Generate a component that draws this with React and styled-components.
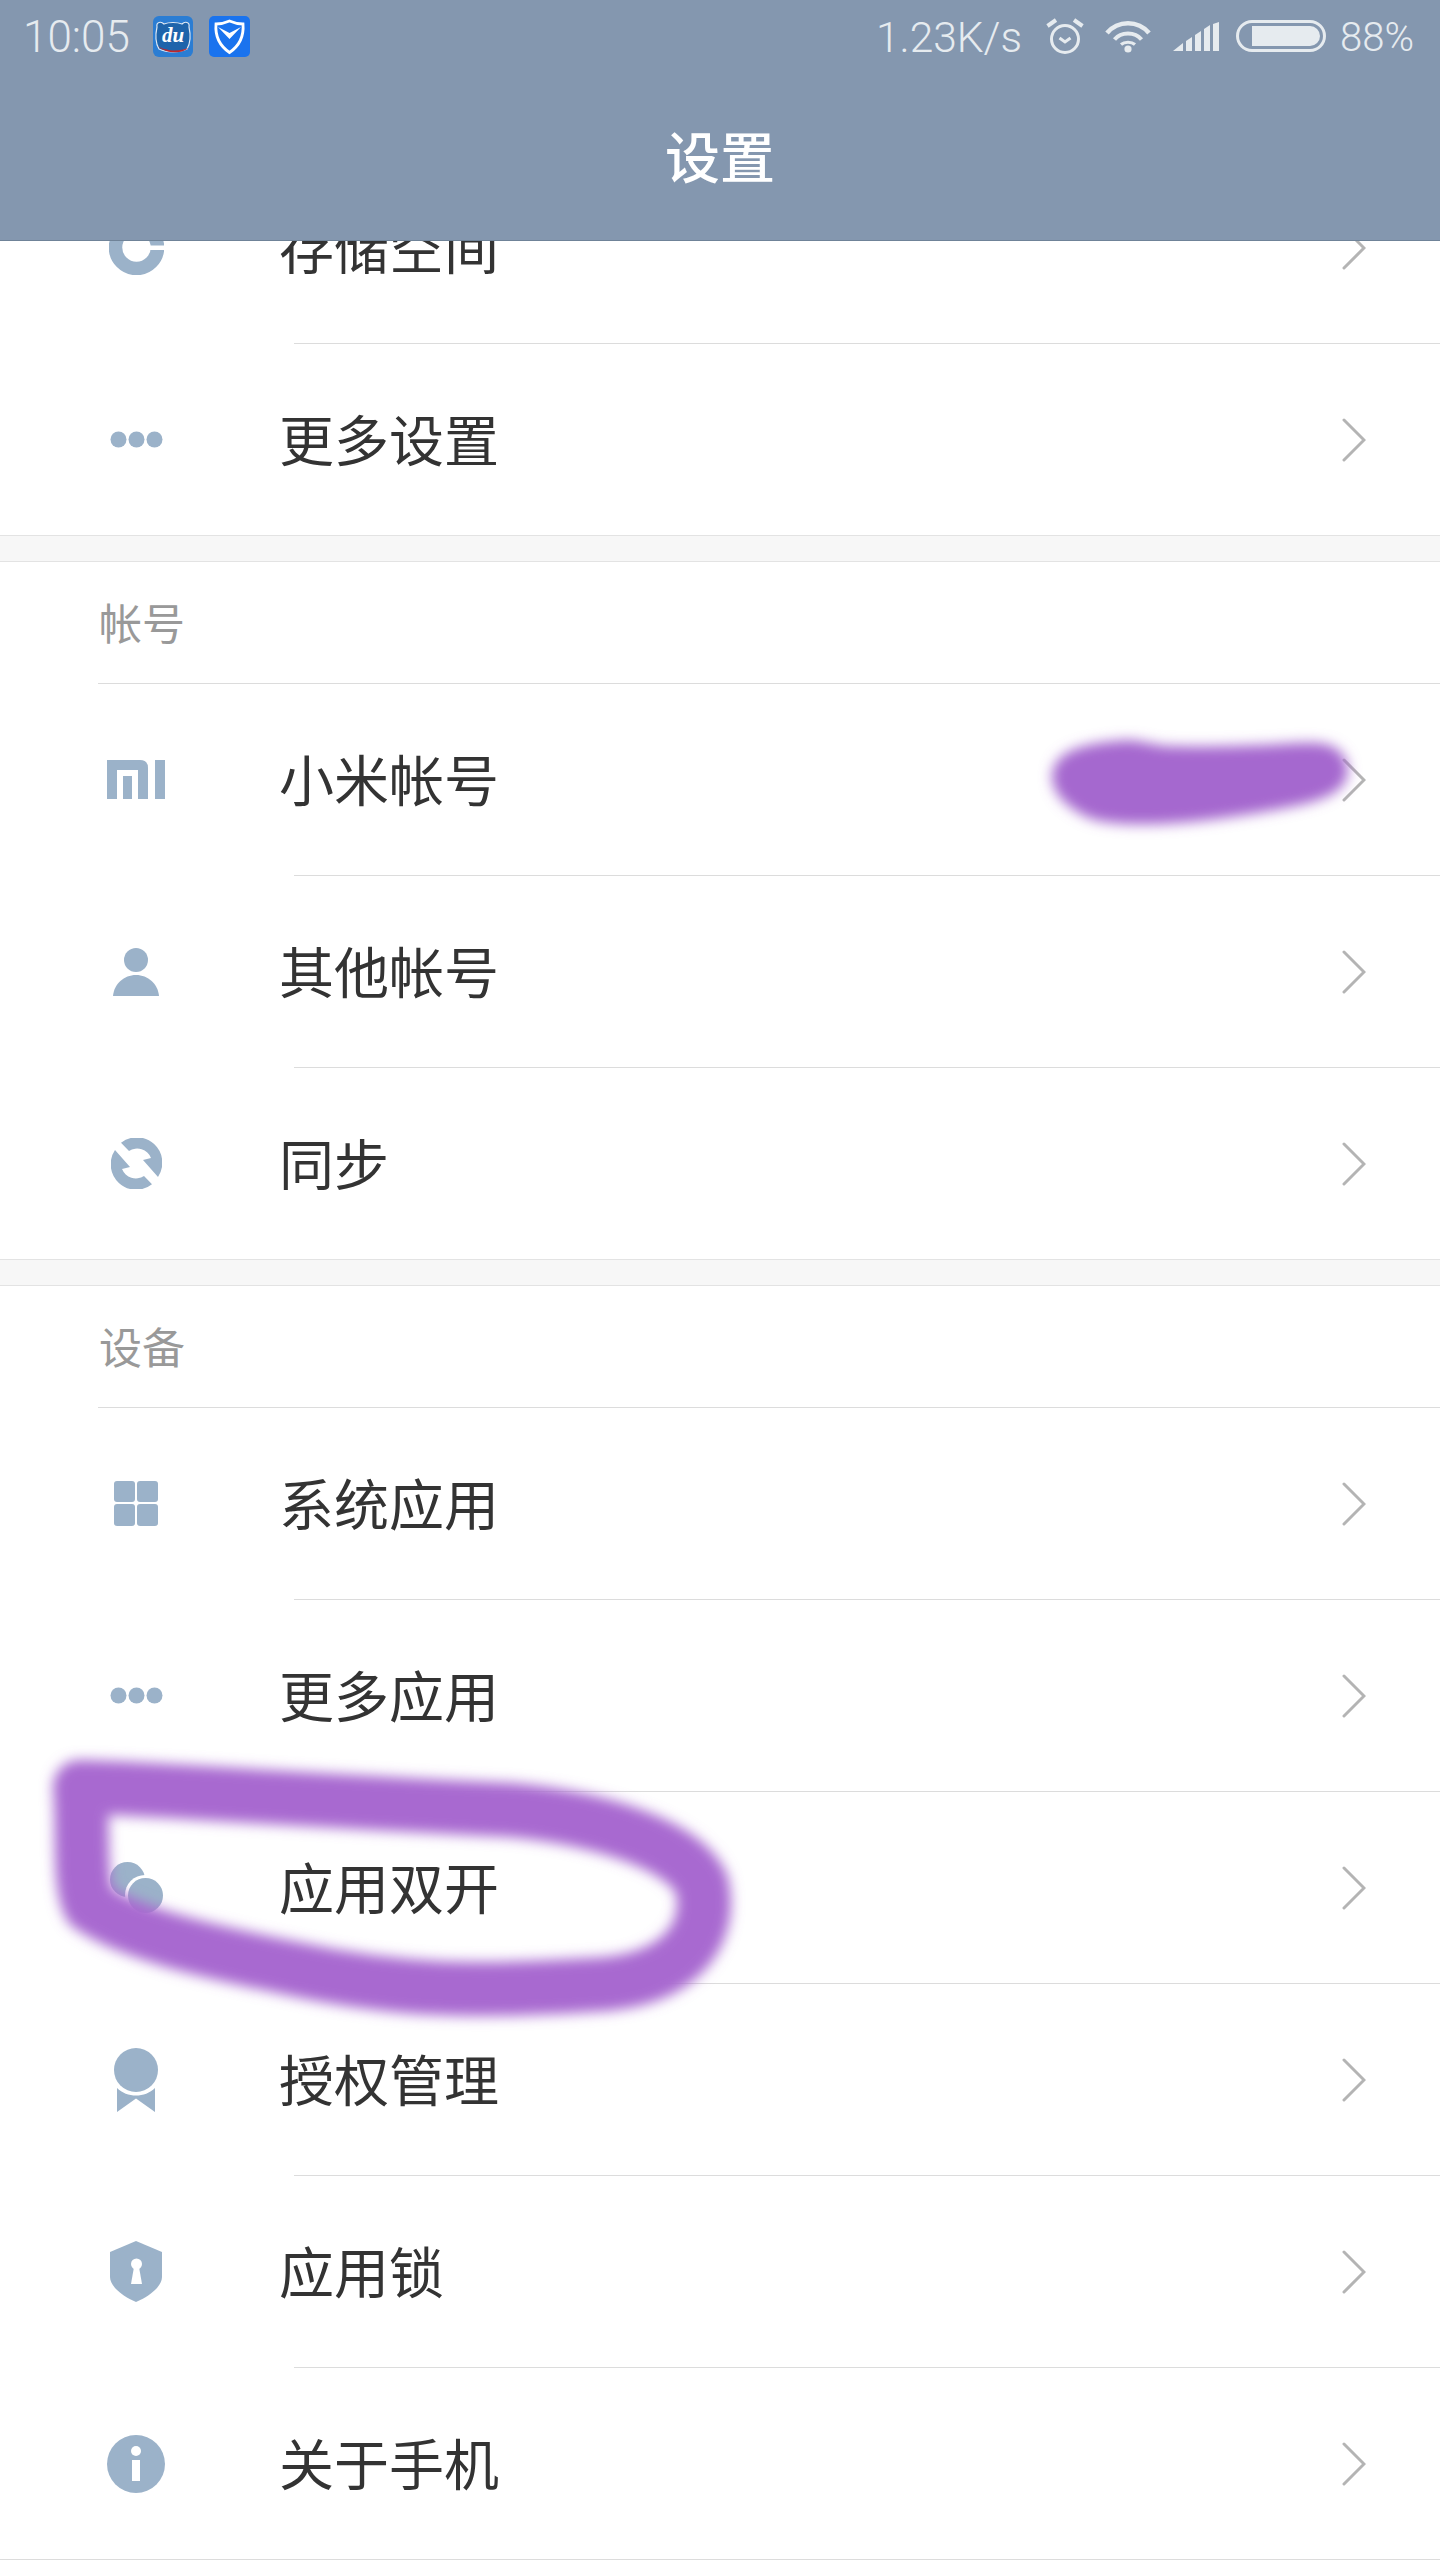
import React from 'react';
import styled, { createGlobalStyle } from 'styled-components';

const GlobalStyle = createGlobalStyle`
	html, body {
		margin: 0;
		padding: 0;
		background: #fff;
	}
`;

const Page = styled.div`
	position: relative;
	width: 1440px;
	height: 2560px;
	padding-top: 152px;
	box-sizing: border-box;
	overflow: hidden;
	background: #fff;
	font-family: "Noto Sans CJK SC", "Noto Sans", sans-serif;
`;

const Header = styled.header`
	position: absolute;
	top: 0;
	left: 0;
	right: 0;
	z-index: 2;
	height: 241px;
	box-sizing: border-box;
	background: #8497af;
	border-bottom: 1px solid #6f8398;
`;

const StatusBar = styled.div`
	display: flex;
	align-items: center;
	justify-content: space-between;
	height: 72px;
	padding: 0 26px 0 23px;
	font-family: Roboto, "Liberation Sans", sans-serif;
	font-weight: 300;
	color: #e6ebef;
`;

const StatusGroup = styled.div`
	display: flex;
	align-items: center;
`;

const StatusText = styled.span`
	padding-top: 3px;
	line-height: 69px;
	font-size: ${p => p.$size}px;
	margin-left: ${p => p.$gap || 0}px;
`;

const TrayIcon = styled.svg`
	display: block;
	flex: none;
	margin-left: ${p => p.$gap || 0}px;
`;

const Title = styled.h1`
	margin: 0;
	height: 168px;
	display: flex;
	align-items: center;
	justify-content: center;
	padding-bottom: 4px;
	box-sizing: border-box;
	font-size: 55px;
	font-weight: 500;
	color: #fff;
`;

const Gap = styled.div`
	height: 27px;
	box-sizing: border-box;
	background: #f7f7f7;
	border-top: 1px solid #e3e3e3;
	border-bottom: 1px solid #e3e3e3;
`;

const SectionTitle = styled.div`
	height: 121px;
	padding-left: 99px;
	padding-bottom: 4px;
	box-sizing: border-box;
	display: flex;
	align-items: center;
	font-size: 43px;
	color: #999;
`;

const Divider = styled.div`
	height: 1px;
	margin-left: ${p => p.$inset}px;
	background: #dcdcdc;
`;

const Row = styled.div`
	display: flex;
	align-items: center;
	height: 191px;
	padding-right: 74px;
`;

const IconSlot = styled.div`
	flex: none;
	width: 272px;
	display: flex;
	justify-content: center;
`;

const Label = styled.div`
	flex: 1;
	margin-left: 7px;
	padding-bottom: 6px;
	font-size: 55px;
	color: #333;
`;

const Glyph = styled.svg`
	display: block;
	fill: #9bb2c9;
`;

const Scribble = styled.svg`
	position: absolute;
	top: 0;
	left: 0;
	z-index: 1;
	pointer-events: none;
`;

const Chevron = () => (
	<svg width="24" height="44" viewBox="0 0 24 44" fill="none" stroke="#b4b4b4" strokeWidth="3" strokeLinecap="round" strokeLinejoin="miter">
		<path d="M2 2 L22 22 L2 42" />
	</svg>
);

const StorageIcon = () => (
	<Glyph width="55" height="55" viewBox="0 0 55 55">
		<circle cx="27.5" cy="27.5" r="21" fill="none" stroke="#9bb2c9" strokeWidth="13.5" />
		<rect x="40" y="25.5" width="16" height="4.5" fill="#fff" />
	</Glyph>
);

const DotsIcon = () => (
	<Glyph width="53" height="17" viewBox="0 0 53 17">
		<circle cx="8.5" cy="8.5" r="8" />
		<circle cx="26.5" cy="8.5" r="8" />
		<circle cx="44.5" cy="8.5" r="8" />
	</Glyph>
);

const MiIcon = () => (
	<Glyph width="58" height="39" viewBox="0 0 58 39">
		<path fillRule="evenodd" d="M0 0 H33 Q41 0 41 8 V39 H31 V10 H10 V39 H0 Z M16 16 H25 V39 H16 Z" />
		<rect x="48" y="0" width="10" height="39" />
	</Glyph>
);

const PersonIcon = () => (
	<Glyph width="46" height="48" viewBox="0 0 46 48">
		<ellipse cx="23" cy="12" rx="12" ry="12" />
		<path d="M0 48 C1 36 11 27 23 27 C35 27 45 36 46 48 Z" />
	</Glyph>
);

const SyncIcon = () => (
	<Glyph width="51" height="51" viewBox="0 0 51 51">
		<path d="M10 4.8 A25.5 25.5 0 0 1 47 39 L32 22 L40 20 A15 15 0 0 0 18 13 Z" />
		<path d="M10 4.8 A25.5 25.5 0 0 1 47 39 L32 22 L40 20 A15 15 0 0 0 18 13 Z" transform="rotate(180 25.5 25.5)" />
	</Glyph>
);

const GridIcon = () => (
	<Glyph width="44" height="45" viewBox="0 0 44 45">
		<rect x="0" y="0" width="21" height="21" rx="3" />
		<rect x="23" y="0" width="21" height="21" rx="3" />
		<rect x="0" y="23" width="21" height="22" rx="3" />
		<rect x="23" y="23" width="21" height="22" rx="3" />
	</Glyph>
);

const TwinIcon = () => (
	<Glyph width="53" height="51" viewBox="0 0 53 51">
		<circle cx="17.5" cy="17.5" r="17.5" />
		<circle cx="35" cy="33" r="20" fill="#fff" />
		<circle cx="35.5" cy="33.5" r="17.5" />
	</Glyph>
);

const MedalIcon = () => (
	<Glyph width="44" height="64" viewBox="0 0 44 64">
		<ellipse cx="22" cy="22" rx="22" ry="22" />
		<path d="M3 40 C8 45 15 47.5 22 47.5 C29 47.5 36 45 41 40 V64 L22 50.5 L3 64 Z" />
	</Glyph>
);

const LockIcon = () => (
	<Glyph width="52" height="61" viewBox="0 0 52 61">
		<path d="M26 0 L52 11 V36 C52 46 38 56 26 61 C14 56 0 46 0 36 V11 Z" />
		<circle cx="26.5" cy="23" r="5.5" fill="#fff" />
		<path d="M24 26 H29 L32 43 H21 Z" fill="#fff" />
	</Glyph>
);

const InfoIcon = () => (
	<Glyph width="58" height="58" viewBox="0 0 58 58">
		<circle cx="29" cy="29" r="29" />
		<circle cx="29" cy="16" r="5" fill="#fff" />
		<rect x="25" y="25" width="8" height="21" fill="#fff" />
	</Glyph>
);

const DuBadge = () => (
	<TrayIcon $gap={23} width="40" height="41" viewBox="0 0 40 41">
		<rect width="40" height="41" rx="6" fill="#2b7dd3" />
		<path d="M4 11 C3 6 8 5 11 8 C16 6 24 6 29 8 C32 5 37 6 36 11 C38 20 37 28 34 33 C26 37 14 37 6 33 C3 28 2 20 4 11 Z" fill="#1e64ab" stroke="#dfe9f4" strokeWidth="1.2" />
		<path d="M5 30 C12 35 26 36 35 32 C30 38 12 38 5 30 Z" fill="#c0262a" />
		<text x="20" y="26" textAnchor="middle" fontFamily="'Liberation Serif', serif" fontStyle="italic" fontWeight="700" fontSize="21" fill="#fff">du</text>
	</TrayIcon>
);

const ShieldBadge = () => (
	<TrayIcon $gap={16} width="41" height="41" viewBox="0 0 41 41">
		<rect width="41" height="41" rx="5" fill="#1a73ee" />
		<path d="M20.5 5 C25 7 30 8 34 8 C35 20 30 30 20.5 36.5 C11 30 6 20 7 8 C11 8 16 7 20.5 5 Z" fill="none" stroke="#fff" strokeWidth="2.8" />
		<path d="M9 11 L20.5 23 L32 11 L20.5 17 Z" fill="#fff" />
	</TrayIcon>
);

const AlarmIcon = () => (
	<TrayIcon $gap={24} width="38" height="36" viewBox="0 0 38 36" fill="none" stroke="#e6ebef">
		<circle cx="19" cy="21" r="13.5" strokeWidth="3" />
		<path d="M13.5 20 L19 24 L24.5 20" strokeWidth="3" />
		<path d="M1.5 8 L10 2" strokeWidth="4" />
		<path d="M36.5 8 L28 2" strokeWidth="4" />
	</TrayIcon>
);

const WifiIcon = () => (
	<TrayIcon $gap={21} width="46" height="33" viewBox="0 0 46 33" fill="none" stroke="#e6ebef">
		<path d="M2 13 C13 0 33 0 44 13" strokeWidth="4.6" />
		<path d="M9.5 19.5 C16 11.5 30 11.5 36.5 19.5" strokeWidth="4" />
		<circle cx="23" cy="29" r="3.6" fill="#e6ebef" stroke="none" />
		<path d="M16 24.5 C19.5 21.5 26.5 21.5 30 24.5" strokeWidth="3.2" />
	</TrayIcon>
);

const SignalIcon = () => (
	<TrayIcon $gap={22} width="46" height="29" viewBox="0 0 46 29" fill="#e6ebef">
		<path d="M0 29 L10 21 V29 Z" />
		<path d="M13 19 L19 15 V29 H13 Z" />
		<path d="M22 13 L28 9 V29 H22 Z" />
		<path d="M31 7 L37 3 V29 H31 Z" />
		<path d="M40 2 L46 0 V29 H40 Z" />
	</TrayIcon>
);

const BatteryIcon = () => (
	<TrayIcon $gap={17} width="90" height="32" viewBox="0 0 90 32">
		<rect x="1.5" y="1.5" width="87" height="29" rx="14.5" fill="none" stroke="#e6ebef" strokeWidth="3" />
		<path d="M16 6 H74 A10 10 0 0 1 74 26 H16 Z" fill="#e6ebef" />
	</TrayIcon>
);

const topRows = [
	{ label: '存储空间', Icon: StorageIcon },
	{ label: '更多设置', Icon: DotsIcon },
];

const sections = [
	{
		title: '帐号',
		rows: [
			{ label: '小米帐号', Icon: MiIcon },
			{ label: '其他帐号', Icon: PersonIcon },
			{ label: '同步', Icon: SyncIcon },
		],
	},
	{
		title: '设备',
		rows: [
			{ label: '系统应用', Icon: GridIcon },
			{ label: '更多应用', Icon: DotsIcon },
			{ label: '应用双开', Icon: TwinIcon },
			{ label: '授权管理', Icon: MedalIcon },
			{ label: '应用锁', Icon: LockIcon },
			{ label: '关于手机', Icon: InfoIcon },
		],
	},
];

const Rows = ({ rows }) => rows.map(({ label, Icon }, i) => (
	<React.Fragment key={label}>
		{i > 0 && <Divider $inset={294} />}
		<Row>
			<IconSlot><Icon /></IconSlot>
			<Label>{label}</Label>
			<Chevron />
		</Row>
	</React.Fragment>
));

const App = () => (
	<Page>
		<GlobalStyle />
		<Header>
			<StatusBar>
				<StatusGroup>
					<StatusText $size={44}>10:05</StatusText>
					<DuBadge />
					<ShieldBadge />
				</StatusGroup>
				<StatusGroup>
					<StatusText $size={42.5}>1.23K/s</StatusText>
					<AlarmIcon />
					<WifiIcon />
					<SignalIcon />
					<BatteryIcon />
					<StatusText $gap={14} $size={40}>88%</StatusText>
				</StatusGroup>
			</StatusBar>
			<Title>设置</Title>
		</Header>

		<Rows rows={topRows} />

		{sections.map(section => (
			<React.Fragment key={section.title}>
				<Gap />
				<SectionTitle>{section.title}</SectionTitle>
				<Divider $inset={98} />
				<Rows rows={section.rows} />
			</React.Fragment>
		))}
		<Divider $inset={0} />

		<Scribble width="1440" height="2560" viewBox="0 0 1440 2560">
			<defs>
				<filter id="marker" x="-10%" y="-30%" width="120%" height="160%">
					<feGaussianBlur stdDeviation="6.5" />
				</filter>
			</defs>
			<path
				filter="url(#marker)"
				fill="#a567cf"
				d="M1052 777 C1053 752 1080 743 1127 740 C1140 740 1155 745 1167 746 C1200 747 1235 746 1260 745 C1285 744 1310 741 1325 744 C1345 749 1350 764 1347 777 C1342 792 1325 799 1300 805 C1260 813 1210 822 1160 824 C1130 825 1100 824 1085 816 C1066 806 1053 794 1052 777 Z"
			/>
			<path
				filter="url(#marker)"
				fill="none"
				stroke="#a869d0"
				strokeWidth="54"
				strokeLinejoin="round"
				d="M80 1787 C130 1787 240 1797 510 1810 C590 1817 684 1842 702 1885 C712 1930 686 1982 590 1985 C480 1992 400 1992 290 1968 C210 1952 130 1934 90 1906 C78 1884 84 1830 80 1787 Z"
			/>
		</Scribble>
	</Page>
);

export default App;
